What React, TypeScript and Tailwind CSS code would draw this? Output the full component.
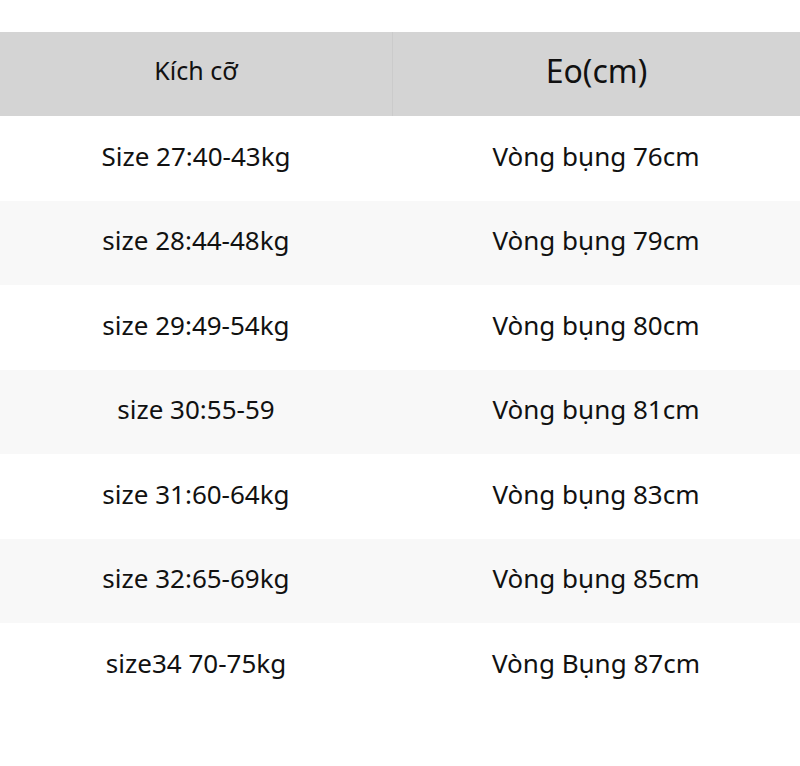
const rows = [
  ['Size 27:40-43kg', 'Vòng bụng 76cm'],
  ['size 28:44-48kg', 'Vòng bụng 79cm'],
  ['size 29:49-54kg', 'Vòng bụng 80cm'],
  ['size 30:55-59', 'Vòng bụng 81cm'],
  ['size 31:60-64kg', 'Vòng bụng 83cm'],
  ['size 32:65-69kg', 'Vòng bụng 85cm'],
  ['size34 70-75kg', 'Vòng Bụng 87cm'],
];

export default function App() {
  return (
    <div className="w-[800px] h-[766px] bg-white pt-8 text-[#111] font-['Noto_Sans','Open_Sans',sans-serif]">
      {/* Header */}
      <div className="grid grid-cols-[392px_408px] h-[84px] bg-[#d4d4d4]">
        <div className="flex items-center justify-center pb-1.5 text-[25px]">Kích cỡ</div>
        <div className="flex items-center justify-center pb-1.5 text-[32px] border-l border-[#cbcbcb]">Eo(cm)</div>
      </div>

      {rows.map(([size, waist], i) => (
        <div
          key={i}
          className={
            i % 2 === 1
              ? 'grid grid-cols-[392px_408px] h-[84.5px] bg-[#f8f8f8]'
              : 'grid grid-cols-[392px_408px] h-[84.5px] bg-white'
          }
        >
          <div className="flex items-center justify-center pb-1 text-[26px]">{size}</div>
          <div className="flex items-center justify-center pb-1 text-[26px]">{waist}</div>
        </div>
      ))}
    </div>
  );
}
